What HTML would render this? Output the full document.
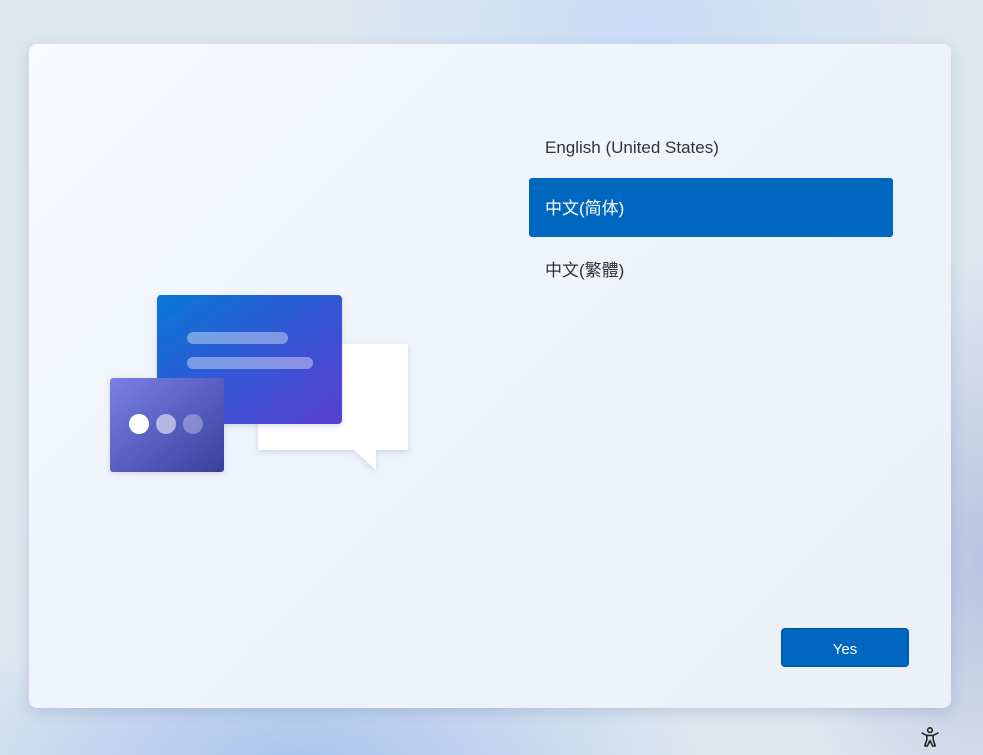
<!DOCTYPE html>
<html><head><meta charset="utf-8"><style>
html,body{margin:0;padding:0}
body{width:983px;height:755px;overflow:hidden;position:relative;font-family:"Liberation Sans","Noto Sans CJK SC",sans-serif;
background:radial-gradient(ellipse 300px 120px at 640px 20px,#c8dcf6,transparent),radial-gradient(ellipse 400px 150px at 300px 760px,#a9c4ee,transparent),radial-gradient(ellipse 200px 300px at 983px 560px,#b9c3e0,transparent),#dde7f0;}
.card{position:absolute;left:29px;top:44px;width:922px;height:664px;border-radius:8px;background:linear-gradient(135deg,#f7fafe 0%,#eef3fc 45%,#ecf0f7 100%);box-shadow:0 4px 14px rgba(60,80,120,.18);}
.item{position:absolute;left:500px;width:364px;height:59px;line-height:61px;padding-left:16px;box-sizing:border-box;font-size:17px;color:#333;}
.sel{background:#0067c0;color:#fff;border-radius:3px}
.btn{position:absolute;left:752px;top:584px;width:128px;height:39px;background:#0067c0;border:1px solid #0050a0;border-radius:4px;box-sizing:border-box;color:#fff;font-size:15px;text-align:center;line-height:42px}
</style></head><body>
<div class="card">
<div class="item" style="top:73px">English (United States)</div>
<div class="item sel" style="top:134px">中文(简体)</div>
<div class="item" style="top:196px">中文(繁體)</div>
<div class="btn">Yes</div>
<svg style="position:absolute;left:71px;top:241px" width="320" height="200" viewBox="100 285 320 200">
<defs>
<linearGradient id="g1" x1="0" y1="0" x2="1" y2="1"><stop offset="0" stop-color="#0778d6"/><stop offset=".5" stop-color="#3257d4"/><stop offset="1" stop-color="#5a3fd0"/></linearGradient>
<linearGradient id="g2" x1="0" y1="0" x2="1" y2="1"><stop offset="0" stop-color="#7a80e6"/><stop offset="1" stop-color="#38409a"/></linearGradient>
<filter id="s" x="-20%" y="-20%" width="140%" height="150%"><feDropShadow dx="0" dy="2" stdDeviation="3" flood-color="#506090" flood-opacity=".2"/></filter>
</defs>
<g filter="url(#s)"><path d="M260 344h146a2 2 0 0 1 2 2v102a2 2 0 0 1-2 2h-30v20l-22-20h-94a2 2 0 0 1-2-2v-102a2 2 0 0 1 2-2z" fill="#fff"/></g>
<rect x="157" y="295" width="185" height="129" rx="4" fill="url(#g1)" filter="url(#s)"/>
<rect x="187" y="332" width="101" height="12" rx="6" fill="#fff" opacity=".38"/>
<rect x="187" y="357" width="126" height="12" rx="6" fill="#fff" opacity=".38"/>
<rect x="110" y="378" width="114" height="94" rx="3" fill="url(#g2)" filter="url(#s)"/>
<circle cx="139" cy="424" r="10" fill="#fff"/>
<circle cx="166" cy="424" r="10" fill="#fff" opacity=".55"/>
<circle cx="193" cy="424" r="10" fill="#fff" opacity=".3"/>
</svg>
</div>
<svg style="position:absolute;left:920px;top:727px" width="20" height="21" viewBox="0 0 18 20" fill="none" stroke="#222" stroke-width="1.5" stroke-linejoin="round">
<circle cx="9" cy="3" r="2.2"/>
<path d="M1 5.5l5 2.5h6l5-2.5M6 8v4l-2 6h2.5l2.5-5 2.5 5H14l-2-6V8"/>
</svg>
</body></html>
